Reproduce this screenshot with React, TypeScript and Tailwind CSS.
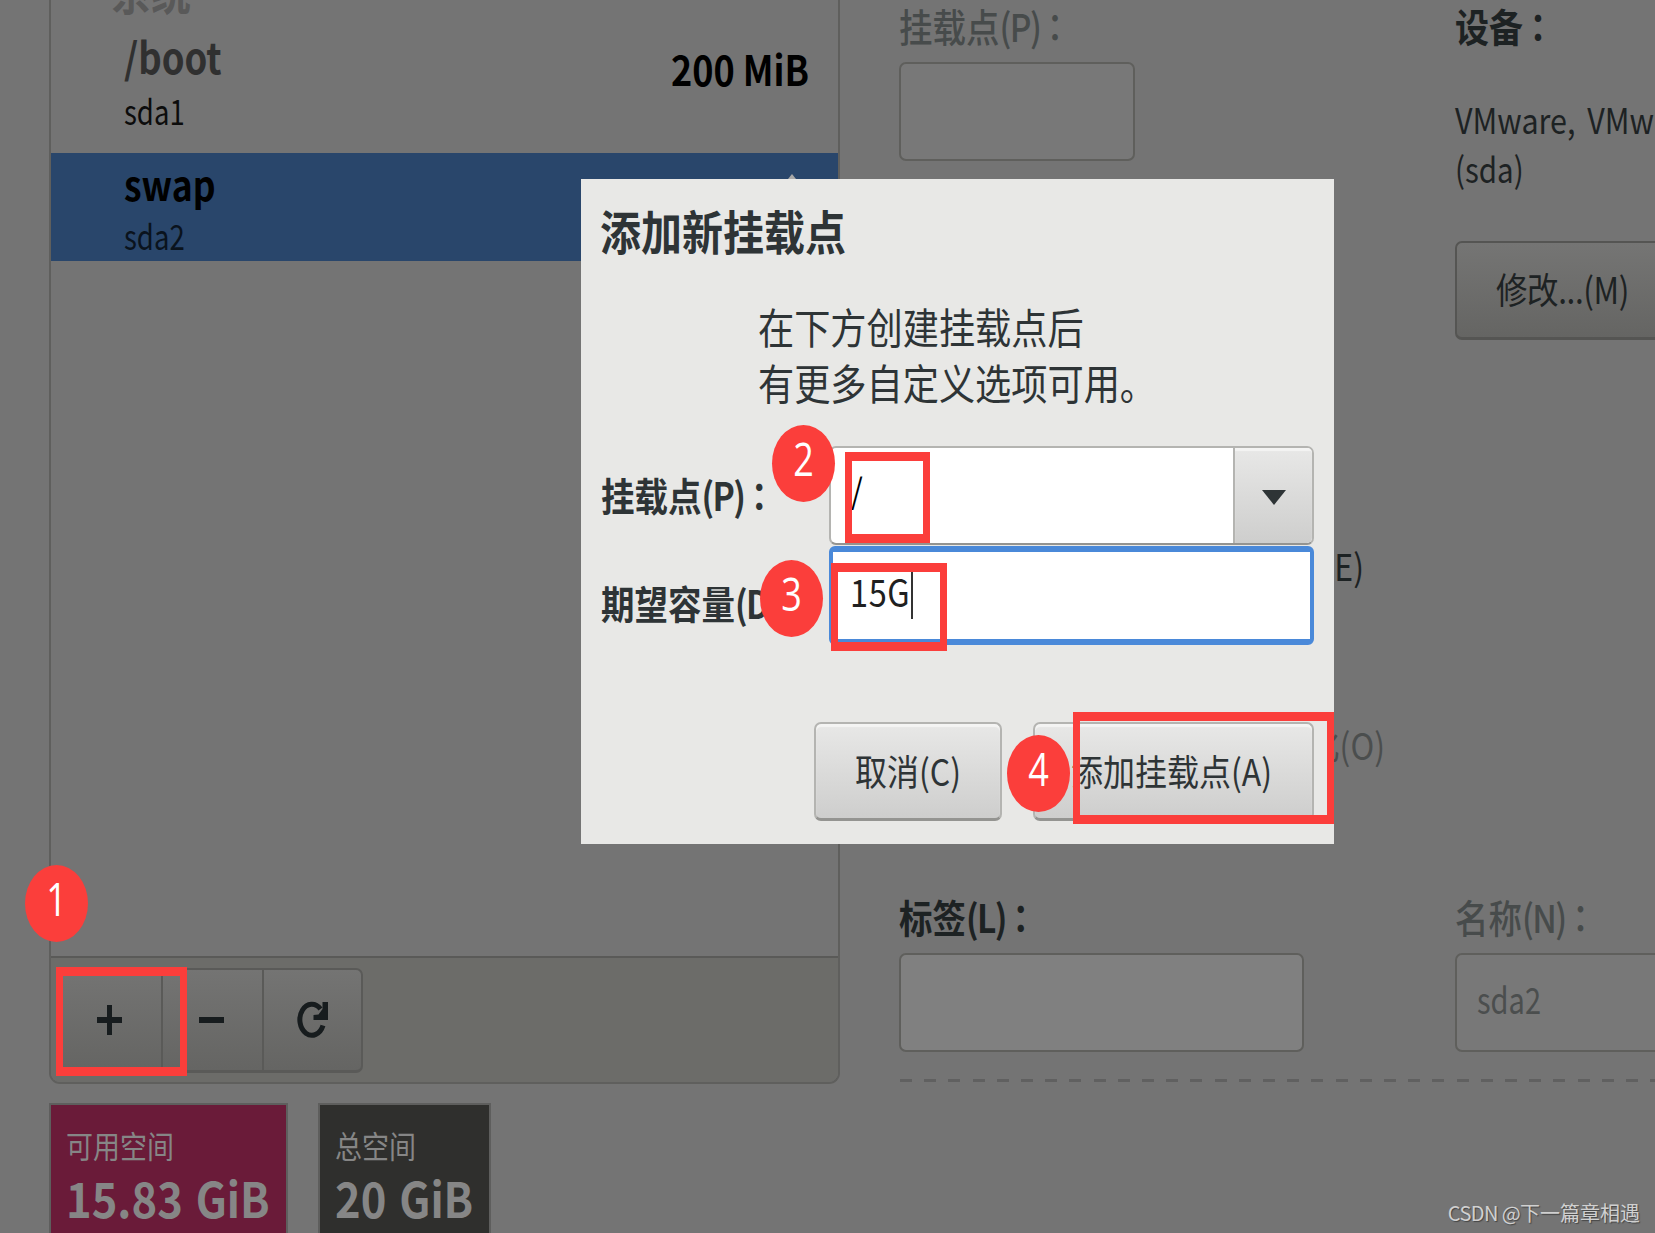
import { ReactNode } from "react";
import clsx from "clsx";

// Installer text is taller than it is wide, every label goes through here
function Label({ children, className = "scale-y-[1.15]" }: { children: ReactNode; className?: string }) {
  return (
    <span className={clsx("inline-block shrink-0 origin-left -translate-y-[1px] whitespace-pre leading-none", className)}>
      {children}
    </span>
  );
}

// Field caption with its mnemonic and a centred full-width colon
function Caption({ text, mnemonic }: { text: string; mnemonic?: string }) {
  return (
    <Label>
      {text}
      {mnemonic && <span className="tracking-[-1.6px]">({mnemonic})</span>}
      <span className="-ml-[2px] inline-block font-['Noto_Sans_CJK_TC',sans-serif]">：</span>
    </Label>
  );
}

function Row({ children, className }: { children?: ReactNode; className?: string }) {
  return <div className={clsx("flex items-center", className)}>{children}</div>;
}

function Step({ n, className }: { n: number; className: string }) {
  return (
    <div className={clsx("absolute flex h-[77px] w-[63px] items-center justify-center rounded-[50%] bg-[#fb3e3b] pb-[7px]", className)}>
      <span className="inline-block scale-y-[1.25] font-['Open_Sans',sans-serif] text-[36px] leading-none text-white">{n}</span>
    </div>
  );
}

function Frame({ className }: { className: string }) {
  return <div className={clsx("absolute border-x-[7px] border-y-[9px] border-[#fb3e3b]", className)} />;
}

function MountList() {
  return (
    <section className="flex h-[1084px] w-[791px] flex-col overflow-hidden rounded-b-[11px] border-2 border-t-0 border-[#5f5f5d]">
      <div className="flex h-[956px] flex-col">
        <Row className="-mt-[28px] h-[38px] pl-[60px] text-[40px] font-bold text-[#595959]">
          <Label>系统</Label>
        </Row>
        <div className="mt-[8px] flex h-[135px] items-start justify-between pl-[73px] pr-[29px]">
          <div>
            <Row className="h-[80px] text-[36.5px] font-bold text-[#303030]">
              <Label>/boot</Label>
            </Row>
            <Row className="h-[28px] text-[27.5px] text-[#0c0c0c]">
              <Label className="scale-y-[1.25]">sda1</Label>
            </Row>
          </div>
          <Row className="mt-[15px] h-[72px] text-[36px] font-bold text-black">
            <Label>200 MiB</Label>
          </Row>
        </div>
        <div className="h-[108px] bg-[#29466b] pl-[73px]">
          <Row className="h-[64px] text-[35.5px] font-bold text-black">
            <Label>swap</Label>
          </Row>
          <Row className="mt-[2px] h-[36px] text-[27.5px] text-[#0a131d]">
            <Label className="scale-y-[1.25]">sda2</Label>
          </Row>
        </div>
      </div>
      <div className="flex flex-1 border-t-2 border-[#5a5a58] bg-[#6c6c69] pl-[5px] pt-[10px]">
        <div className="flex h-[105px] w-[307px] overflow-hidden rounded-[7px] border-2 border-b-[3px] border-[#5a5a58] bg-gradient-to-b from-[#747473] to-[#656563] text-[#171c1e]">
          <div className="flex w-[105px] items-center justify-center border-r-2 border-[#5a5a58]">
            <svg width="25" height="30" viewBox="0 0 25 30" fill="currentColor">
              <path d="M10 0h5v12h10v6H15v12h-5V18H0v-6h10z" />
            </svg>
          </div>
          <div className="flex w-[101px] items-center justify-center border-r-2 border-[#5a5a58] pr-[2px]">
            <div className="h-[6px] w-[25px] bg-current" />
          </div>
          <div className="flex flex-1 items-center justify-center pr-[2px]">
            <svg width="34" height="38" viewBox="0 0 34 38" fill="none" stroke="currentColor">
              <path d="M28 24.5A12 15.5 0 1 1 25.5 8" strokeWidth="5" />
              <path d="M33 1v18H18.5v-5l5-.5 4-5.500V1z" fill="currentColor" stroke="none" />
            </svg>
          </div>
        </div>
      </div>
    </section>
  );
}

function Space({ title, value, className }: { title: string; value: string; className: string }) {
  return (
    <div className={clsx("h-[130px] border-2 border-b-0 border-[#5e5e5d] pl-[15px] pt-[23px] text-[#868686]", className)}>
      <Row className="h-[35px] text-[27px]">
        <Label>{title}</Label>
      </Row>
      <Row className="h-[71px] text-[43.5px] font-bold">
        <Label className="scale-y-[1.12] [word-spacing:3px]">{value}</Label>
      </Row>
    </div>
  );
}

function Details() {
  return (
    <section className="ml-[59px] flex w-[900px] shrink-0 flex-col">
      <div className="flex h-[500px]">
        <div className="w-[556px] shrink-0">
          <Row className="h-[54px] text-[33.5px] font-medium text-[#474b4b]">
            <Caption text="挂载点" mnemonic="P" />
          </Row>
          <div className="mt-[8px] h-[99px] w-[236px] rounded-[7px] border-2 border-[#5f5f5c] bg-[#787878]" />
        </div>
        <div className="shrink-0 text-[#1d2223]">
          <Row className="h-[54px] text-[34px] font-bold">
            <Caption text="设备" />
          </Row>
          <Row className="mt-[41px] h-[50px] text-[30.5px]">
            <Label className="scale-y-[1.17] [word-spacing:5px]">VMware, VMware Virtual S</Label>
          </Row>
          <Row className="h-[50px] text-[29.5px]">
            <Label className="scale-y-[1.2]">(sda)</Label>
          </Row>
          <Row className="mt-[46px] h-[99px] w-[220px] rounded-[7px] border-2 border-b-[3px] border-[#555553] bg-gradient-to-b from-[#757574] to-[#656563] pl-[39px] text-[31.5px] tracking-[-0.4px]">
            <Label>修改...(M)</Label>
          </Row>
        </div>
      </div>
      <Row className="h-[132px] w-[465px] justify-end text-[32px] text-[#1d2223]">
        <Label>加密(E)</Label>
      </Row>
      <Row className="mt-[46px] h-[134px] w-[486px] justify-end text-[32px] text-[#4b4e4e]">
        <Label>重新格式化(O)</Label>
      </Row>
      <div className="mt-[79px] flex">
        <div className="w-[556px] shrink-0">
          <Row className="h-[54px] text-[33.5px] font-bold text-[#1d2223]">
            <Caption text="标签" mnemonic="L" />
          </Row>
          <div className="mt-[8px] h-[99px] w-[405px] rounded-[7px] border-2 border-[#5f5f5c] bg-[#808080]" />
        </div>
        <div className="shrink-0">
          <Row className="h-[54px] text-[33.5px] font-medium text-[#474b4b]">
            <Caption text="名称" mnemonic="N" />
          </Row>
          <Row className="mt-[8px] h-[99px] w-[300px] rounded-[7px] border-2 border-[#5f5f5c] bg-[#787878] pb-[6px] pl-[20px] text-[29px] text-[#4b4e4e]">
            <Label className="scale-y-[1.25]">sda2</Label>
          </Row>
        </div>
      </div>
      <div className="ml-px mt-[27px] h-[3px] bg-[repeating-linear-gradient(90deg,#606060_0_12px,transparent_12px_24.2px)]" />
    </section>
  );
}

function GtkButton({ children, className }: { children: ReactNode; className: string }) {
  return (
    <div className={clsx("flex h-[99px] items-center rounded-[7px] border-2 border-b-[3px] border-[#b4b4b1] border-b-[#949491] bg-gradient-to-b from-[#e8e8e7] to-[#cececd] text-[32px] shadow-[inset_0_3px_1px_#f4f4f3]", className)}>
      {children}
    </div>
  );
}

function AddMountDialog() {
  return (
    <div className="absolute left-[581px] top-[179px] h-[665px] w-[753px] bg-[#e8e8e6] text-[#2e3436]">
      <Row className="h-[102px] pl-[19px] text-[41px] font-bold">
        <Label>添加新挂载点</Label>
      </Row>
      <div className="mt-[18px] pl-[177px] text-[36.2px]">
        <Row className="h-[56px]">
          <Label>在下方创建挂载点后</Label>
        </Row>
        <Row className="h-[56px]">
          <Label>有更多自定义选项可用。</Label>
        </Row>
      </div>
      <div className="mt-[35px] flex h-[199px]">
        <div className="w-[248px] shrink-0 pl-[20px] text-[33.5px] font-bold">
          <Row className="h-[100px]">
            <Caption text="挂载点" mnemonic="P" />
          </Row>
          <Row className="mt-[8px] h-[100px]">
            <Caption text="期望容量" mnemonic="D" />
          </Row>
        </div>
        <div className="w-[485px]">
          <div className="flex h-[99px] overflow-hidden rounded-[7px] border-2 border-[#b4b4b1] border-b-[#949491] bg-white">
            <Row className="w-[402px] pb-[11px] pl-[20px] text-[30px] text-black">
              <Label>/</Label>
            </Row>
            <div className="flex flex-1 items-center justify-center border-l-2 border-[#b4b4b1] bg-gradient-to-b from-[#e8e8e7] to-[#cececd] pt-[3px] shadow-[inset_0_3px_1px_#f4f4f3]">
              <svg width="24" height="15" viewBox="0 0 24 15" fill="currentColor">
                <path d="M0 0h24L12 15z" />
              </svg>
            </div>
          </div>
          <div className="mt-px flex h-[99px] items-start rounded-[6px] border-x-4 border-y-[6px] border-[#4a89d9] bg-white pl-[17px] pt-[20px] text-[32.5px] text-[#202020]">
            <Row className="h-[47px]">
              <Label className="-mt-[6px] scale-y-[1.18] tracking-[0.6px]">15G</Label>
              <div className="ml-px h-[47px] w-[2px] bg-[#333]" />
            </Row>
          </div>
        </div>
      </div>
      <div className="mt-[77px] flex gap-[31px] pl-[233px]">
        <GtkButton className="w-[188px] pl-[39px]">
          <Label>取消(C)</Label>
        </GtkButton>
        <GtkButton className="w-[281px] justify-end pr-[40px]">
          <Label>添加挂载点(A)</Label>
        </GtkButton>
      </div>
    </div>
  );
}

export default function App() {
  return (
    <div className="relative h-[1233px] w-[1655px] overflow-hidden bg-[#747474] font-['Noto_Sans_CJK_SC',sans-serif]">
      <div className="flex">
        <div className="ml-[49px] w-[791px] shrink-0">
          <MountList />
          <div className="mt-[19px] flex gap-[30px]">
            <Space title="可用空间" value="15.83 GiB" className="w-[239px] bg-[#6a1b39]" />
            <Space title="总空间" value="20 GiB" className="w-[173px] bg-[#2f2f2d]" />
          </div>
        </div>
        <Details />
      </div>

      <div className="absolute left-[788px] top-[174px] border-x-[4px] border-b-[5px] border-x-transparent border-b-[#a9a9a8]" />
      <AddMountDialog />

      {/* Numbered walkthrough marks */}
      <Frame className="left-[56px] top-[967px] h-[109px] w-[131px]" />
      <Frame className="left-[845px] top-[452px] h-[91px] w-[85px]" />
      <Frame className="left-[831px] top-[563px] h-[88px] w-[116px]" />
      <Frame className="left-[1073px] top-[712px] h-[112px] w-[261px]" />
      <Step n={1} className="left-[25px] top-[865px]" />
      <Step n={2} className="left-[772px] top-[425px]" />
      <Step n={3} className="left-[760px] top-[560px]" />
      <Step n={4} className="left-[1007px] top-[735px]" />

      <span className="absolute bottom-[9px] right-[15px] whitespace-nowrap text-[20px] leading-[22px] text-[#d0d0d0] [text-shadow:1px_1px_1px_#444]">
        <span className="tracking-[-0.6px]">CSDN @</span>下一篇章相遇
      </span>
    </div>
  );
}
